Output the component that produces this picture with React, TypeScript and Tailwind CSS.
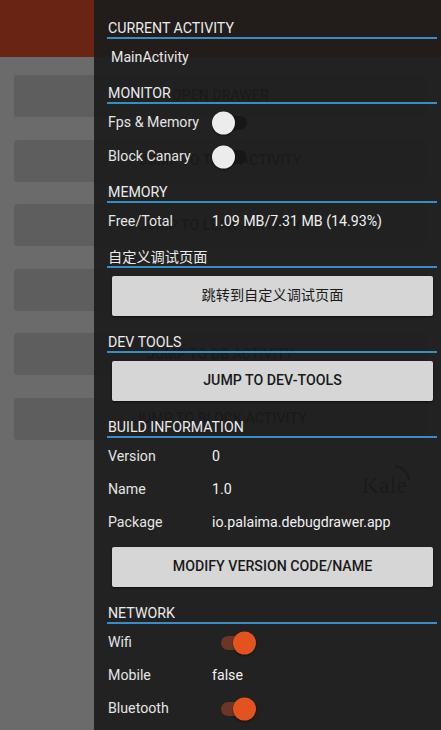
import type { ReactNode } from "react";

const appButtons = [
  "Open drawer",
  "Jump to test activity",
  "Jump to leak activity",
  "Jump to okhttp activity",
  "Jump to db activity",
  "Jump to block activity",
];

function Header({ title, first }: { title: string; first?: boolean }) {
  return (
    <div className={first ? "pt-[19px]" : "pt-[9px]"}>
      <div className="h-[18px] pl-px leading-[18px] text-[#ebebeb]">{title}</div>
      <div className="h-[2px] bg-[#3a8dc4]" />
    </div>
  );
}

function Row({ label, children, h = "h-[33px]" }: { label: string; children?: ReactNode; h?: string }) {
  return (
    <div className={`flex items-center pl-px ${h}`}>
      <span className="w-[104px] shrink-0 text-[#e4e4e4]">{label}</span>
      <span className="flex items-center text-[#f0f0f0]">{children}</span>
    </div>
  );
}

function Switch({ on, className = "" }: { on?: boolean; className?: string }) {
  return (
    <span className={`relative inline-flex h-[24px] w-[35px] items-center ${className}`}>
      <span className={`h-[14px] w-full rounded-full ${on ? "bg-[#6c3626]" : "bg-[#171717]"}`} />
      <span
        className={`absolute top-1/2 size-[23px] -translate-y-1/2 rounded-full shadow-[0_1px_2px_rgba(0,0,0,0.5)] ${
          on ? "right-0 bg-[#e4531f]" : "left-0 bg-[#ececec]"
        }`}
      />
    </span>
  );
}

function DrawerButton({ children, upper }: { children: ReactNode; upper?: boolean }) {
  return (
    <button
      className={`mt-2 mb-2 ml-[5px] mr-[4px] flex h-[40px] w-[calc(100%-9px)] items-center justify-center rounded-[2px] bg-[#d6d6d6] text-[14.2px] text-[#1a1a1a] shadow-[0_1px_2px_rgba(0,0,0,0.6)] ${
        upper ? "font-medium uppercase" : ""
      }`}
    >
      {children}
    </button>
  );
}

export default function App() {
  return (
    <div className="relative h-[730px] w-[441px] overflow-hidden bg-[#6b6b6b] font-['Roboto','Noto_Sans_CJK_SC',sans-serif] text-[14.2px]">
      {/* app behind the drawer (already dimmed by scrim) */}
      <div className="h-[57px] bg-[#6a2413]" />
      <div className="flex flex-col gap-[22.6px] px-[14px] pt-[18px]">
        {appButtons.map((b) => (
          <div
            key={b}
            className="flex h-[42px] items-center justify-center rounded-[3px] bg-[#5e5e5e] font-medium uppercase text-[#080808]"
          >
            {b}
          </div>
        ))}
      </div>
      <div className="flex justify-end pr-[34px] pt-[34px]">
        <div className="relative font-['Liberation_Serif',serif] text-[24px] leading-[22px] text-[#0a0a0a]">
          Kale
          <svg className="absolute -top-[10px] -right-[4px]" width="18" height="18" viewBox="0 0 18 18">
            <path d="M2 2 Q14 4 16 16" fill="none" stroke="#0a0a0a" strokeWidth="2" />
          </svg>
        </div>
      </div>

      {/* debug drawer */}
      <aside className="absolute inset-y-0 left-[94px] right-0 bg-[#1c1c1c]/[0.92] pl-[13px] pr-[4px] leading-normal">
        <Header title="CURRENT ACTIVITY" first />
        <div className="mt-[2px] flex h-[34px] items-center pl-[4px] text-[#e8e8e8]">MainActivity</div>

        <Header title="MONITOR" />
        <div className="mt-[2px]">
          <Row label="Fps & Memory" h="h-[34px]">
            <Switch />
          </Row>
          <Row label="Block Canary" h="h-[34px]">
            <Switch />
          </Row>
        </div>

        <Header title="MEMORY" />
        <div className="mt-[2px]">
          <Row label="Free/Total" h="h-[34px]">
            1.09 MB/7.31 MB (14.93%)
          </Row>
        </div>

        <Header title="自定义调试页面" />
        <DrawerButton>跳转到自定义调试页面</DrawerButton>

        <Header title="DEV TOOLS" />
        <DrawerButton upper>Jump to Dev-Tools</DrawerButton>

        <Header title="BUILD INFORMATION" />
        <div className="mt-[2px]">
          <Row label="Version">0</Row>
          <Row label="Name">1.0</Row>
          <Row label="Package">io.palaima.debugdrawer.app</Row>
        </div>
        <DrawerButton upper>Modify version code/name</DrawerButton>

        <Header title="NETWORK" />
        <div className="mt-[2px]">
          <Row label="Wifi">
            <Switch on className="ml-[9px]" />
          </Row>
          <Row label="Mobile">false</Row>
          <Row label="Bluetooth">
            <Switch on className="ml-[9px]" />
          </Row>
        </div>
      </aside>
    </div>
  );
}
